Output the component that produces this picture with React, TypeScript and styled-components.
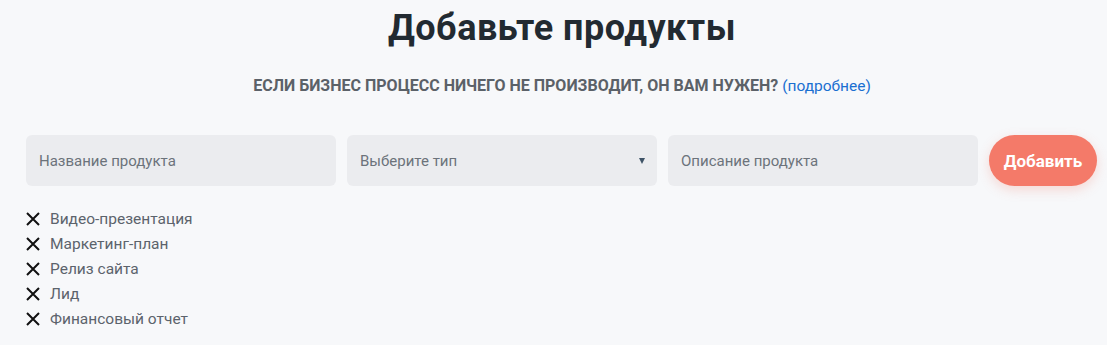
import React from 'react'
import styled, { createGlobalStyle } from 'styled-components'

const GlobalStyle = createGlobalStyle`
  html, body {
    margin: 0;
    padding: 0;
    background: #f7f8fa;
  }
  body {
    font-family: Roboto, "Liberation Sans", sans-serif;
  }
  * { box-sizing: border-box; }
`

const Page = styled.div`
  width: 1107px;
  height: 345px;
  padding: 0 9px 0 26px;
  overflow: hidden;
`

const Title = styled.h1`
  margin: 0;
  padding-top: 6px;
  text-align: center;
  font-size: 36px;
  line-height: 44px;
  font-weight: 700;
  color: #222a31;
  letter-spacing: 0.5px;
`

const Subtitle = styled.p`
  margin: 26px 0 0;
  text-align: center;
  font-size: 16px;
  line-height: 20px;
  font-weight: 700;
  color: #5b6168;
  text-transform: uppercase;
  letter-spacing: 0;

  a {
    text-transform: none;
    font-weight: 400;
    font-size: 15.5px;
    color: #1a6fd1;
    text-decoration: none;
  }
`

const Form = styled.div`
  display: flex;
  align-items: center;
  gap: 11px;
  margin-top: 39px;
`

const Field = styled.div`
  position: relative;
  width: 310px;
  height: 51px;
  border-radius: 6px;
  background: #ebecef;
  display: flex;
  align-items: center;
  padding: 0 12px 0 13px;
  font-size: 15px;
  color: #6c737b;
`

const Caret = styled.span`
  position: absolute;
  right: 12px;
  top: 50%;
  transform: translateY(-50%);
  width: 0;
  height: 0;
  border-left: 3.5px solid transparent;
  border-right: 3.5px solid transparent;
  border-top: 6px solid #3f5367;
`

const AddButton = styled.button`
  width: 108px;
  height: 51px;
  border: 0;
  border-radius: 26px;
  background: #f47a69;
  color: #fff;
  font-family: inherit;
  font-size: 17px;
  font-weight: 700;
  box-shadow: 0 4px 12px rgba(244, 122, 105, 0.25);
  cursor: pointer;
`

const List = styled.ul`
  list-style: none;
  margin: 20px 0 0;
  padding: 0;
`

const Item = styled.li`
  display: flex;
  align-items: center;
  gap: 10px;
  height: 25px;
  font-size: 15.5px;
  color: #5c636c;
`

const Cross = styled.svg`
  width: 14px;
  height: 14px;
  stroke: #111;
  stroke-width: 2;
  flex: none;
`

const products = [
  'Видео-презентация',
  'Маркетинг-план',
  'Релиз сайта',
  'Лид',
  'Финансовый отчет',
]

export default function App() {
  return (
    <Page>
      <GlobalStyle />
      <Title>Добавьте продукты</Title>
      <Subtitle>
        Если бизнес процесс ничего не производит, он вам нужен? <a href="#">(подробнее)</a>
      </Subtitle>
      <Form>
        <Field>Название продукта</Field>
        <Field>
          Выберите тип
          <Caret />
        </Field>
        <Field>Описание продукта</Field>
        <AddButton>Добавить</AddButton>
      </Form>
      <List>
        {products.map(p => (
          <Item key={p}>
            <Cross viewBox="0 0 14 14">
              <path d="M1 1 L13 13 M13 1 L1 13" />
            </Cross>
            {p}
          </Item>
        ))}
      </List>
    </Page>
  )
}
